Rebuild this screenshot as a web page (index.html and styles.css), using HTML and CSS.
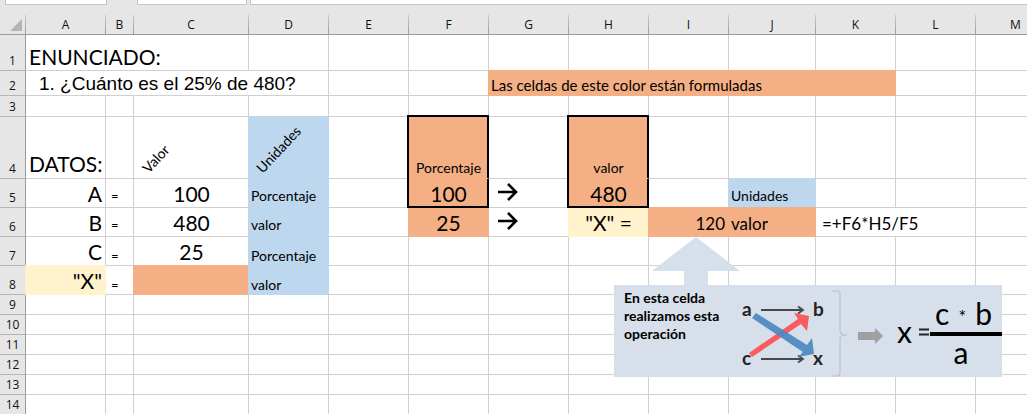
FILE: index.html
```html
<!DOCTYPE html>
<html lang="es">
<head>
<meta charset="utf-8">
<title>Regla de tres: porcentaje</title>
<link rel="stylesheet" href="styles.css">
</head>
<body>
<main class="sheet">
  <div class="formula-bar"><div class="bar-box bar-name"></div><div class="bar-box bar-buttons"></div><div class="bar-box bar-input"></div></div>
  <div class="grid-area">
  <table class="grid">
    <colgroup><col class="c-head"><col class="c-std"><col class="c-b"><col class="c-c"><col class="c-std"><col class="c-std"><col class="c-std"><col class="c-std"><col class="c-std"><col class="c-std"><col class="c-j"><col class="c-std"><col class="c-std"><col class="c-std"></colgroup>
    <thead>
      <tr><th class="corner"><svg width="12" height="12" viewBox="0 0 12 12"><path d="M12 0V12H0Z" fill="#b4b4b4"/></svg></th><th>A</th><th>B</th><th>C</th><th>D</th><th>E</th><th>F</th><th>G</th><th>H</th><th>I</th><th>J</th><th>K</th><th>L</th><th>M</th></tr>
    </thead>
    <tbody>
      <tr class="r1"><th>1</th><td colspan="3" class="big">ENUNCIADO:</td><td></td><td></td><td></td><td></td><td></td><td></td><td></td><td></td><td></td><td></td></tr>
      <tr class="r2"><th>2</th><td colspan="4" class="question">1. ¿Cuánto es el 25% de 480?</td><td></td><td></td><td colspan="5" class="fill orange note">Las celdas de este color están formuladas</td><td></td><td></td></tr>
      <tr class="r3"><th>3</th><td></td><td></td><td></td><td></td><td></td><td></td><td></td><td></td><td></td><td></td><td></td><td></td><td></td></tr>
      <tr class="r4"><th>4</th><td class="big">DATOS:</td><td></td><td><span class="slanted">Valor</span></td><td class="fill blue"><span class="slanted">Unidades</span></td><td></td><td class="fill orange center box-top">Porcentaje</td><td></td><td class="fill orange center box-top">valor</td><td></td><td></td><td></td><td></td><td></td></tr>
      <tr class="r5"><th>5</th><td class="big right">A</td><td class="eq">=</td><td class="big center">100</td><td class="fill blue mid">Porcentaje</td><td></td><td class="fill orange big center box-bottom">100</td><td class="arrow"><svg width="20" height="18" viewBox="0 0 20 18"><path d="M0 9H18M10 1L18 9L10 17" fill="none" stroke="#000" stroke-width="2.6"/></svg></td><td class="fill orange big center box-bottom">480</td><td></td><td class="fill blue mid">Unidades</td><td></td><td></td><td></td></tr>
      <tr class="r6"><th>6</th><td class="big right">B</td><td class="eq">=</td><td class="big center">480</td><td class="fill blue mid">valor</td><td></td><td class="fill orange big center">25</td><td class="arrow"><svg width="20" height="18" viewBox="0 0 20 18"><path d="M0 9H18M10 1L18 9L10 17" fill="none" stroke="#000" stroke-width="2.6"/></svg></td><td class="fill cream big center">"X" =</td><td class="fill orange medium right">120</td><td class="fill orange medium">valor</td><td colspan="2" class="medium formula-text">=+F6*H5/F5</td><td></td></tr>
      <tr class="r7"><th>7</th><td class="big right">C</td><td class="eq">=</td><td class="big center">25</td><td class="fill blue">Porcentaje</td><td></td><td></td><td></td><td></td><td></td><td></td><td></td><td></td><td></td></tr>
      <tr class="r8"><th>8</th><td class="fill cream big right">"X"</td><td class="eq">=</td><td class="fill orange"></td><td class="fill blue">valor</td><td></td><td></td><td></td><td></td><td></td><td></td><td></td><td></td><td></td></tr>
      <tr><th>9</th><td></td><td></td><td></td><td></td><td></td><td></td><td></td><td></td><td></td><td></td><td></td><td></td><td></td></tr>
      <tr><th>10</th><td></td><td></td><td></td><td></td><td></td><td></td><td></td><td></td><td></td><td></td><td></td><td></td><td></td></tr>
      <tr><th>11</th><td></td><td></td><td></td><td></td><td></td><td></td><td></td><td></td><td></td><td></td><td></td><td></td><td></td></tr>
      <tr><th>12</th><td></td><td></td><td></td><td></td><td></td><td></td><td></td><td></td><td></td><td></td><td></td><td></td><td></td></tr>
      <tr><th>13</th><td></td><td></td><td></td><td></td><td></td><td></td><td></td><td></td><td></td><td></td><td></td><td></td><td></td></tr>
      <tr><th>14</th><td></td><td></td><td></td><td></td><td></td><td></td><td></td><td></td><td></td><td></td><td></td><td></td><td></td></tr>
    </tbody>
  </table>
  <aside class="callout">
    <svg class="pointer" width="88" height="48" viewBox="0 0 88 48"><path d="M44 0L88 34H56V48H32V34H0Z" fill="#d6dfea"/></svg>
    <div class="panel">
      <p class="callout-text">En esta celda realizamos esta operación</p>
      <svg class="cross" width="108" height="92" viewBox="0 0 108 92">
        <g class="cross-label"><text x="0" y="31">a</text><text x="71" y="31">b</text><text x="0" y="80">c</text><text x="71" y="80">x</text></g>
        <g fill="none" stroke="#45484d" stroke-width="1.8"><path d="M19 25H61M56 21.500L61 25L56 28.500"/><path d="M19 74H61M56 70.500L61 74L56 77.500"/></g>
        <path d="M10 72L59 39L65 46L67 31L52 28L56 34L7 68Z" fill="#f95b5f"/>
        <path d="M14 28L10 33L61 67L56 72L72 69L70 53L65 60Z" fill="#4d88c0" fill-opacity=".93"/>
        <path d="M90 6H95Q98 6 98 9V46Q98 50 105 50Q98 50 98 53V88Q98 91 95 91H90" fill="none" stroke="#bcc2ca" stroke-width="1.200"/>
      </svg>
      <svg class="grey-arrow" width="25" height="16" viewBox="0 0 25 16"><path d="M0 4H17V0L25 8L17 16V12H0Z" fill="#9f9f9f"/></svg>
      <div class="equation"><span>x</span><svg class="equals" width="10" height="8" viewBox="0 0 10 8"><path d="M0 1.500H10M0 6.500H10" stroke="#222" stroke-width="2"/></svg>
        <div class="fraction"><div class="numerator"><span>c</span><span class="times">*</span><span>b</span></div><div class="denominator">a</div></div>
      </div>
    </div>
  </aside>
  </div>
</main>
</body>
</html>
```
FILE: styles.css
```css
* { box-sizing: border-box; }
body { margin: 0; background: #fff; color: #000; font: 14px/16px Lato, "Open Sans", sans-serif; }
.sheet { overflow: hidden; min-height: 100vh; background: #fff; }

.formula-bar { display: flex; height: 15px; align-items: flex-start; background: #e6e6e6; padding-left: 5px; }
.bar-box { height: 5px; background: #fff; border: 1px solid #c6c6c6; border-top: 0; }
.bar-name { width: 102px; }
.bar-buttons { width: 110px; margin-left: 30px; }
.bar-input { flex: 1; margin-left: 3px; border-right: 0; }

.grid-area { position: relative; }
.grid { width: 1056px; table-layout: fixed; border-collapse: separate; border-spacing: 0; }
.c-head { width: 26px; }
.c-std { width: 80px; }
.c-b { width: 28px; }
.c-c { width: 115px; }
.c-j { width: 87px; }

tr { height: 20px; }
.r1 { height: 36px; }
.r2 { height: 25px; }
.r3 { height: 21px; }
.r4 { height: 62px; }
.r5, .r6, .r7, .r8 { height: 29px; }

th { padding: 0; background: #e6e6e6; font: 12px/16px "Open Sans", sans-serif; color: #111; }
thead th { border-bottom: 1px solid #999; border-right: 1px solid; border-image: linear-gradient(#ccc, #999) 1; }
thead .corner { vertical-align: bottom; text-align: right; padding-right: 3px; line-height: 0; padding-bottom: 3px; }
tbody th { vertical-align: bottom; padding-bottom: 1px; border-right: 1px solid #999; border-bottom: 1px solid #b5b5b5; }
td { padding: 0 2px 1px 3px; vertical-align: bottom; border-right: 1px solid #d0d0d0; border-bottom: 1px solid #d0d0d0; white-space: nowrap; }
.fill { padding-left: 2px; }

.right { text-align: right; padding-right: 3px; }
.center { text-align: center; }
.mid { padding-bottom: 3px; }
.big { font-size: 21px; line-height: 24px; }
.medium { font-size: 17px; line-height: 20px; padding-bottom: 2px; }
.eq { padding-left: 5px; font-size: 13px; }
.r5 .eq, .r6 .eq { padding-bottom: 3px; }
.question { padding: 0 0 0 13px; font: 19px/22px "Liberation Sans", Arial, sans-serif; }
.note { font-size: 15px; line-height: 18px; }
.formula-text { padding-left: 6px; }
.arrow { padding: 0 0 6px 9px; line-height: 0; }
.r4 td { padding-bottom: 2px; }
.slanted { display: inline-block; margin-left: 14px; transform: rotate(-47deg); transform-origin: 0 100%; }

/* A filled cell also covers the grid lines on its left and top edges. */
.fill { position: relative; background: var(--fill); border-color: var(--fill); box-shadow: -1px 0 var(--fill), 0 -1px var(--fill), -1px -1px var(--fill); }
.orange { --fill: #f4b084; }
.blue { --fill: #bdd7ee; }
.cream { --fill: #fff2cc; }
.box-top { z-index: 1; border-right-color: #000; box-shadow: inset -1px 0 #000, -2px 0 #000, 0 -2px #000, -2px -2px #000; }
.box-bottom { z-index: 1; border-right-color: #000; border-bottom-color: #000; box-shadow: inset -1px -1px #000, -2px 0 #000; }

/* The callout floats over the grid and points at cell I6. */
.callout { position: absolute; z-index: 2; left: 614px; top: 222px; }
.pointer { display: block; margin-left: 38px; }
.panel { display: flex; align-items: center; height: 92px; padding-left: 10px; background: #d6dfea; }
.callout-text { width: 118px; margin: 0; padding-top: 4px; align-self: flex-start; font-weight: 700; line-height: 18px; }
.cross-label { font: 700 19px Lato, sans-serif; fill: #222; }
.grey-arrow { margin-left: 8px; margin-top: 10px; }
.equation { display: flex; align-items: center; margin-left: 14px; font-size: 30px; line-height: 32px; }
.equals { margin: 2px 1px 0 7px; }
.fraction { width: 72px; }
.numerator { display: flex; justify-content: space-between; align-items: center; padding: 0 10px 0 5px; border-bottom: 4px solid #000; }
.times { padding-top: 6px; font-size: 18px; }
.denominator { padding-right: 10px; text-align: center; }
```
